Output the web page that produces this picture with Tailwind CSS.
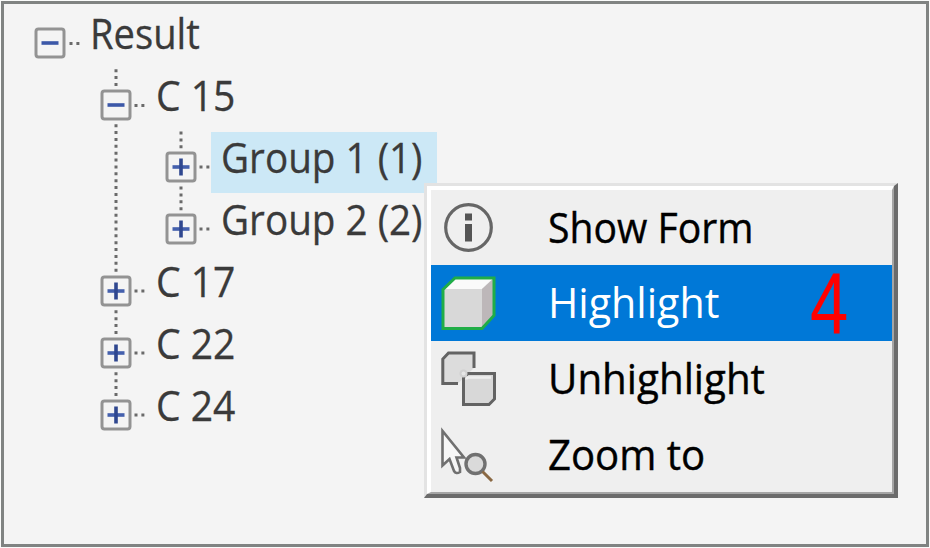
<!DOCTYPE html>
<html lang="en">
<head>
  <meta charset="UTF-8" />
  <title>Result</title>
  <script src="https://cdn.jsdelivr.net/npm/@tailwindcss/browser@4"></script>
</head>
<body class="bg-[#fafbfa] w-[930px] h-[548px] overflow-hidden pl-px pt-px">
  <!-- shared tree toggles -->
  <svg class="hidden">
    <defs>
      <linearGradient id="face" x1="0" y1="0" x2="0" y2="1">
        <stop offset="0.5" stop-color="#ffffff" />
        <stop offset="1" stop-color="#dedede" />
      </linearGradient>
      <symbol id="minus" viewBox="0 0 32 32">
        <rect x="2" y="2" width="28" height="28" rx="2.5" fill="url(#face)" stroke="#939393" stroke-width="3" />
        <path d="M7.5 16h17" stroke="#3c58a8" stroke-width="3.6" />
      </symbol>
      <symbol id="plus" viewBox="0 0 32 32">
        <rect x="2" y="2" width="28" height="28" rx="2.5" fill="url(#face)" stroke="#939393" stroke-width="3" />
        <path d="M7.5 16h17" stroke="#4460ad" stroke-width="3.6" />
        <path d="M16 7.5v17" stroke="#2f478f" stroke-width="3.6" />
      </symbol>
    </defs>
  </svg>

  <main class="relative w-[928px] h-[546px] border-[3px] border-[#808382] bg-[#f4f4f4] font-['Open_Sans',sans-serif] text-[42px] text-[#3a3a3a] whitespace-nowrap">
    <!-- dotted connectors -->
    <svg class="absolute -left-1 -top-1 w-[930px] h-[548px]" viewBox="0 0 930 548" fill="none" stroke="#6a6a6a" stroke-width="3" stroke-dasharray="3 3.88">
      <path d="M116 69.2V88M116 124.2V274M116 310.3V336M116 372.3V398" />
      <path d="M181 131.5V150M181 186.5V212" />
      <path d="M69.500 43.500h11M134.500 105.500h11M134.500 291h11M134.500 353h11M134.500 415h11M199.500 167h11M199.500 229h11" />
    </svg>

    <ul class="relative pt-1 leading-[50px] [-webkit-text-stroke:0.3px]">
      <li class="flex h-[62px] pl-[30px]">
        <svg class="size-8 mt-[19px]"><use href="#minus" /></svg>
        <span class="ml-[24px] origin-left scale-x-[.908]">Result</span>
      </li>
      <li class="flex h-[62px] pl-[96px]">
        <svg class="size-8 mt-[19px]"><use href="#minus" /></svg>
        <span class="ml-[24px] origin-left scale-x-[.93]">C 15</span>
      </li>
      <li class="flex h-[62px] pl-[161px]">
        <svg class="size-8 mt-[19px]"><use href="#plus" /></svg>
        <div class="ml-[14px] w-[226px] h-[61px] bg-[#cce8f6] pl-2.5">
          <span class="inline-block origin-left scale-x-[.92]">Group 1 (1)</span>
        </div>
      </li>
      <li class="flex h-[62px] pl-[161px]">
        <svg class="size-8 mt-[19px]"><use href="#plus" /></svg>
        <span class="ml-[24px] origin-left scale-x-[.92]">Group 2 (2)</span>
      </li>
      <li class="flex h-[62px] pl-[96px]">
        <svg class="size-8 mt-[19px]"><use href="#plus" /></svg>
        <span class="ml-[24px] origin-left scale-x-[.93]">C 17</span>
      </li>
      <li class="flex h-[62px] pl-[96px]">
        <svg class="size-8 mt-[19px]"><use href="#plus" /></svg>
        <span class="ml-[24px] origin-left scale-x-[.93]">C 22</span>
      </li>
      <li class="flex h-[62px] pl-[96px]">
        <svg class="size-8 mt-[19px]"><use href="#plus" /></svg>
        <span class="ml-[24px] origin-left scale-x-[.93]">C 24</span>
      </li>
    </ul>

    <!-- context menu -->
    <div class="absolute left-[420px] top-[179px] w-[474px] h-[315px] border-t-[3px] border-l-[3px] border-r-[4px] border-b-[4px] border-t-[#e3e3e3] border-l-[#e3e3e3] border-r-[#6b6b6b] border-b-[#6b6b6b] text-black leading-[74px]">
      <ul class="h-full bg-[#efefef] border-t-4 border-l-4 border-t-white border-l-white border-r-2 border-b-2 border-r-[#a5a5a5] border-b-[#a5a5a5]">
        <li class="flex h-[75px] pl-[9px]">
          <svg class="w-[58px] h-[76px] shrink-0" viewBox="440 190 58 76" fill="none">
            <circle cx="468.500" cy="227.500" r="22.800" stroke="#666666" stroke-width="3.2" />
            <path d="M468.500 213.500v7M468.500 224v17.500" stroke="#555555" stroke-width="7" />
          </svg>
          <span class="ml-[50px] origin-left scale-x-[.932] [-webkit-text-stroke:0.4px]">Show Form</span>
        </li>
        <li class="relative flex h-[76px] pl-[9px] bg-[#0078d7] text-white">
          <svg class="w-[58px] h-[76px] shrink-0" viewBox="440 265 58 76">
            <path d="M443 289.500L455 278H494V315.500L482 328.500H443Z" fill="#d8d8d8" />
            <path d="M444 289L456 278.500H493L482 289Z" fill="#fafafa" />
            <path d="M482 289L493 279V315L482 327Z" fill="#bdb7b9" />
            <path d="M443 289.500L455 278H494V315.500L482 328.500H443Z" fill="none" stroke="#20ad47" stroke-width="3" />
          </svg>
          <span class="ml-[50px] origin-left scale-x-[.98]">Highlight</span>
          <span class="absolute left-[379px] top-[2px] origin-left scale-x-[.79] font-['Liberation_Sans',sans-serif] text-[87px] text-[#ff0000]">4</span>
        </li>
        <li class="flex h-[76px] pl-[9px]">
          <svg class="w-[58px] h-[76px] shrink-0" viewBox="440 341 58 76" stroke="#636363" stroke-width="3">
            <path d="M458 383.500H442.800V359L448.500 353H474V368" fill="#dcdcdc" />
            <path d="M463.500 404.500V378L468 373.500H494.500V399L489 404.500Z" fill="#d8d8d8" />
            <path d="M466.500 379.500V377.500H491" fill="none" stroke="#eeeeee" stroke-width="2.500" />
            <circle cx="463.500" cy="373.500" r="3" fill="#e6e6e6" stroke="#d0d0d0" stroke-width="2" />
          </svg>
          <span class="ml-[50px] origin-left scale-x-[.96] [-webkit-text-stroke:0.4px]">Unhighlight</span>
        </li>
        <li class="flex h-[75px] pl-[9px]">
          <svg class="w-[58px] h-[75px] shrink-0" viewBox="440 417 58 75" fill="none" stroke="#707070" stroke-width="2.600">
            <path d="M442.500 431V465.500L449.500 459L454 471Q456 474.500 460 472V468L456.500 457.500H464Z" fill="#f7f7f7" />
            <circle cx="475.500" cy="464" r="9.500" fill="#dadada" stroke-width="3.400" />
            <path d="M482.500 471.500L492 481" stroke="#8a6843" stroke-width="3" />
          </svg>
          <span class="ml-[50px] origin-left scale-x-[.955] [-webkit-text-stroke:0.4px]">Zoom to</span>
        </li>
      </ul>
    </div>
  </main>
</body>
</html>
